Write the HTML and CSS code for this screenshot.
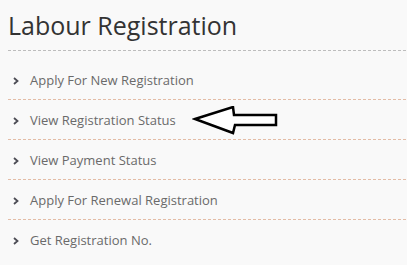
FILE: index.html
```html
<!DOCTYPE html>
<html lang="en">
<head>
<meta charset="utf-8">
<title>Labour Registration</title>
<link rel="stylesheet" href="styles.css">
</head>
<body>
<div class="page">
  <h1 class="title">Labour Registration</h1>
  <ul class="menu">
    <li class="menu-item"><svg class="chev" viewBox="0 0 6 8" width="6" height="8"><path d="M1 1 L4.5 4 L1 7" fill="none" stroke="currentColor" stroke-width="1.8"/></svg><span>Apply For New Registration</span></li>
    <li class="menu-item"><svg class="chev" viewBox="0 0 6 8" width="6" height="8"><path d="M1 1 L4.5 4 L1 7" fill="none" stroke="currentColor" stroke-width="1.8"/></svg><span>View Registration Status</span></li>
    <li class="menu-item"><svg class="chev" viewBox="0 0 6 8" width="6" height="8"><path d="M1 1 L4.5 4 L1 7" fill="none" stroke="currentColor" stroke-width="1.8"/></svg><span>View Payment Status</span></li>
    <li class="menu-item"><svg class="chev" viewBox="0 0 6 8" width="6" height="8"><path d="M1 1 L4.5 4 L1 7" fill="none" stroke="currentColor" stroke-width="1.8"/></svg><span>Apply For Renewal Registration</span></li>
    <li class="menu-item last"><svg class="chev" viewBox="0 0 6 8" width="6" height="8"><path d="M1 1 L4.5 4 L1 7" fill="none" stroke="currentColor" stroke-width="1.8"/></svg><span>Get Registration No.</span></li>
  </ul>
  <svg class="arrow" viewBox="0 0 90 32" width="90" height="32"><polygon points="3,13 41,1 42,9 84,9 84,19 43,19 41,27" fill="#fff" stroke="#000" stroke-width="2.5" stroke-linejoin="miter"/></svg>
</div>
</body>
</html>
```
FILE: styles.css
```css
html, body {
  margin: 0;
  padding: 0;
  background: #f9f9f9;
  overflow: hidden;
}
.page {
  position: relative;
  padding: 7px 0 0 8px;
  font-family: "Open Sans", "DejaVu Sans", sans-serif;
}
.title {
  margin: 0;
  font-size: 25px;
  line-height: 36px;
  font-weight: 400;
  color: #333;
  height: 36px;
  padding-bottom: 8px;
  background: repeating-linear-gradient(to right, #bdbdbd 0 3px, transparent 3px 5px) left bottom / 100% 1px no-repeat;
}
.menu {
  list-style: none;
  margin: 0;
  padding: 9px 0 0 0;
}
.menu-item {
  display: flex;
  align-items: center;
  height: 39px;
  padding-bottom: 1px;
  font-size: 13px;
  color: #6a6a6a;
  background: repeating-linear-gradient(to right, #e3bca6 0 3px, transparent 3px 5px) left bottom / 100% 1px no-repeat;
}
.menu-item.last {
  background: none;
}
.chev {
  color: #4d4d55;
  margin: 2px 0 0 5px;
  width: 6px;
  height: 8px;
  flex: none;
}
.menu-item span {
  margin-left: 11px;
}
.arrow {
  position: absolute;
  left: 192px;
  top: 106px;
}
```
